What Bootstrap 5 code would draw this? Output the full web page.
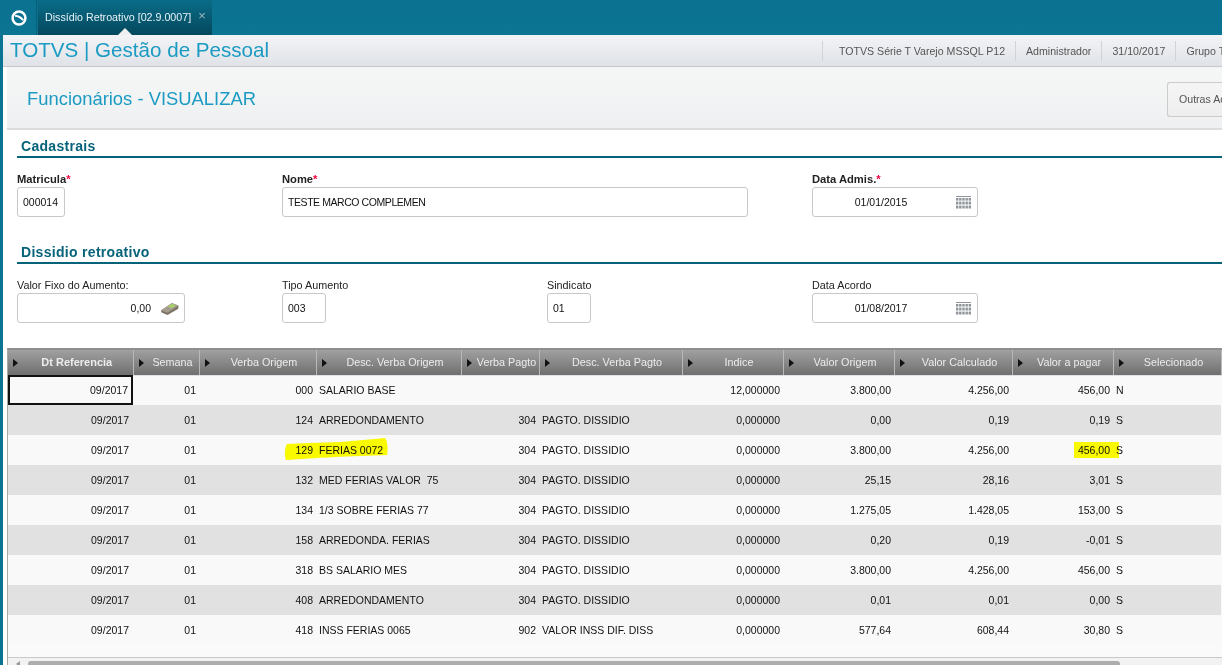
<!DOCTYPE html>
<html lang="pt-BR">
<head>
<meta charset="utf-8">
<title>Dissídio Retroativo</title>
<link href="https://cdn.jsdelivr.net/npm/bootstrap@5.3.0/dist/css/bootstrap.min.css" rel="stylesheet">
<style>
html,body{width:1222px;height:665px;overflow:hidden;margin:0}
body{background:#0a7492;font-family:"Liberation Sans",Arial,sans-serif;color:#111;font-size:10.5px;line-height:1.2}
.topbar{height:35px;background:linear-gradient(#0b7190,#0b7594)}
.logocell{width:37px;border-right:1px solid #0a5f78;padding-left:1px}
.tabitem{width:174px;margin-left:1px;background:linear-gradient(#0a6c88,#04485d);color:#e6f3f7;font-size:10.7px;padding:0 7px;height:35px;position:relative;white-space:nowrap}
.tabitem::after{content:"";position:absolute;left:80px;bottom:0;border:7px solid transparent;border-top:0;border-bottom-color:#eef0f2}
.tabclose{color:#9fb8c2;font-size:13px;margin-left:7px;line-height:1;margin-top:-4px}
.pagebody{margin-left:3px;height:630px;background:#fff;overflow:hidden}
.appbar{height:32px;background:linear-gradient(#f3f4f6,#dfe2e7);border-bottom:1px solid #c5c8cc;white-space:nowrap}
.apptitle{font-size:20.6px;color:#1b9bc3;margin-left:7px;line-height:1;width:812px;flex:none}
.appinfo{color:#555;font-size:10.6px;border-left:1px solid #d0d3d7;height:20px;line-height:20px;padding:0 10px;flex:none}
.appinfo.firstinfo{padding:0 10px 0 16px}
.barpad{padding-top:3px;background:linear-gradient(90deg,#fff 4px,#f4f5f5 4px)}
.pagebar{height:60px;margin-left:4px;background:linear-gradient(#f5f6f6,#eff0f1);border-bottom:2px solid #dcdcdc;white-space:nowrap;position:relative}
.pagetitle{font-size:18.4px;color:#1b9bc3;margin-left:20px;width:1140px;flex:none}
.otherbtn{height:35px;width:70px;flex:none;border:1px solid #ccc;border-radius:3px 0 0 3px;background:linear-gradient(#f5f5f5,#eee);color:#555;font-size:10.6px;padding:0 0 0 11px;text-align:left;border-right:0;margin-top:1px;white-space:nowrap;overflow:hidden;line-height:33px}
.sectbox{margin-left:14px}
.secthead{color:#07637a;font-size:14px;font-weight:700;letter-spacing:.3px;border-bottom:2px solid #07637a;padding-left:4px;line-height:16px;padding-top:8px;box-sizing:content-box;height:18px}
.fieldrow{padding-top:15px}
.fieldcell{width:265px;flex:none}
.fieldname{font-size:10.8px;height:14px;line-height:13px;color:#222;white-space:nowrap}
.fieldname.strong{font-weight:700;font-size:11.2px}
.reqmark{color:#f0003c}
.valuebox.form-control{height:30px;min-height:30px;border:1px solid #c8c8c8;border-radius:3px;padding:0 5px;font-size:10.5px;line-height:28px;color:#111;background:#fff;white-space:nowrap;overflow:hidden;display:flex;align-items:center}
.w48{width:48px}.w44{width:44px}.w466{width:466px}.w166{width:166px}.w168{width:168px}
.tightcaps{letter-spacing:-.43px}
.calicon{margin-right:1px;margin-left:16px;flex:none}
.cashicon{margin-right:-1px;margin-left:9px;flex:none}
.gapone{height:19px}
.gridwrap{margin:25px 0 0 4px;position:relative;border-left:1px solid #a9a9a9;border-top:2px solid #8f8f8f;height:317px;background:#fafafa}
.datagrid{table-layout:fixed;width:1213px;border-collapse:collapse;margin:0;font-size:10.5px;color:#111}
.datagrid th{height:25px;padding:0;background:linear-gradient(#a0a0a0,#6f6f6f);color:#ececec;font-weight:400;font-size:10.8px;border-right:1px solid #b9b9b9;white-space:nowrap;vertical-align:middle}
.datagrid th:first-child{font-weight:700;font-size:11px}
.hcaret{width:13px;flex:none;padding-left:5px;display:flex}
.hcaret::before{content:"";border-left:5px solid #111;border-top:4px solid transparent;border-bottom:4px solid transparent;margin-top:2px}
.datagrid td{height:30px;padding:0 3px;border:0;white-space:nowrap;overflow:hidden;background:#f9f9f9;box-shadow:none;vertical-align:middle}
.datagrid tr.shaderow td{background:#e1e1e1}
.datagrid td.num{text-align:right}
.datagrid td:first-child{padding-right:4px}
.datagrid td.cursorcell{outline:2px solid #111;outline-offset:-2px;padding-right:5px}
.markers{position:absolute;left:0;top:0;mix-blend-mode:multiply;pointer-events:none}
.scrollzone{position:absolute;left:0;right:0;bottom:0;height:8px;border-top:1px solid #c9c9c9;background:#f2f2f2}
.scrollthumb{position:absolute;left:20px;width:1092px;top:3px;height:6px;background:#adadad;border-radius:3px 3px 0 0}
.scrollarrow{position:absolute;left:8px;top:3px;border-right:4px solid #999;border-top:3px solid transparent;border-bottom:3px solid transparent}
</style>
</head>
<body>
<svg width="0" height="0" class="position-absolute">
  <symbol id="calgrid" viewBox="0 0 15 13">
    <rect x="0" y="0" width="15" height="1" fill="#8f959b"/>
    <g fill="#8f959b">
      <rect x="0" y="2" width="2.4" height="2.6"/><rect x="3.1" y="2" width="2.4" height="2.6"/><rect x="6.3" y="2" width="2.4" height="2.6"/><rect x="9.5" y="2" width="2.4" height="2.6"/><rect x="12.6" y="2" width="2.4" height="2.6"/>
      <rect x="0" y="5.6" width="2.4" height="2.9"/><rect x="3.1" y="5.6" width="2.4" height="2.9"/><rect x="6.3" y="5.6" width="2.4" height="2.9"/><rect x="9.5" y="5.6" width="2.4" height="2.9"/><rect x="12.6" y="5.6" width="2.4" height="2.9"/>
      <rect x="0" y="9.6" width="2.4" height="2.9"/><rect x="3.1" y="9.6" width="2.4" height="2.9"/><rect x="6.3" y="9.6" width="2.4" height="2.9"/><rect x="9.5" y="9.6" width="2.4" height="2.9"/><rect x="12.6" y="9.6" width="2.4" height="2.9"/>
    </g>
  </symbol>
</svg>

<div class="topbar d-flex">
  <div class="logocell d-flex align-items-center justify-content-center">
    <svg width="18" height="18" viewBox="0 0 18 18"><circle cx="9" cy="9" r="6.4" fill="none" stroke="#fff" stroke-width="2.5"/><path d="M5 6.8c3 .2 6 1.8 8.2 4.4" fill="none" stroke="#fff" stroke-width="2"/></svg>
  </div>
  <div class="tabitem d-flex align-items-center"><span>Dissídio Retroativo [02.9.0007]</span><span class="tabclose">×</span></div>
</div>

<div class="pagebody">
  <div class="appbar d-flex align-items-center">
    <div class="apptitle">TOTVS | Gestão de Pessoal</div>
    <div class="appinfo firstinfo">TOTVS Série T Varejo MSSQL P12</div>
    <div class="appinfo">Administrador</div>
    <div class="appinfo">31/10/2017</div>
    <div class="appinfo">Grupo TOTVS</div>
  </div>
  <div class="barpad">
    <div class="pagebar d-flex align-items-center">
      <div class="pagetitle">Funcionários - VISUALIZAR</div>
      <button type="button" class="otherbtn">Outras Ações</button>
    </div>
  </div>

  <div class="sectbox">
    <div class="secthead">Cadastrais</div>
    <div class="fieldrow d-flex">
      <div class="fieldcell"><div class="fieldname strong">Matricula<span class="reqmark">*</span></div><div class="valuebox form-control w48">000014</div></div>
      <div class="fieldcell"><div class="fieldname strong">Nome<span class="reqmark">*</span></div><div class="valuebox form-control w466"><span class="tightcaps">TESTE MARCO COMPLEMEN</span></div></div>
      <div class="fieldcell"></div>
      <div class="fieldcell"><div class="fieldname strong">Data Admis.<span class="reqmark">*</span></div><div class="valuebox form-control w166"><span class="flex-grow-1 text-center ps-1">01/01/2015</span><svg width="15" height="13" class="calicon"><use href="#calgrid"/></svg></div></div>
    </div>
    <div class="gapone"></div>
    <div class="secthead">Dissidio retroativo</div>
    <div class="fieldrow d-flex">
      <div class="fieldcell"><div class="fieldname">Valor Fixo do Aumento:</div><div class="valuebox form-control w168"><span class="flex-grow-1 text-end">0,00</span>
        <svg width="20" height="15" viewBox="0 0 20 15" class="cashicon"><path d="M1 9.5 12 2.2l6.5 2.6-.2 3L7.5 14 1.5 11.6z" fill="#7d7468"/><path d="M1 9.2 12 2l6.5 2.6L7.5 11.8z" fill="#a59c8e"/><path d="M7.8 5.6 12.2 2.8l3.8 1.5-4.4 2.9z" fill="#a8d06a"/></svg></div></div>
      <div class="fieldcell"><div class="fieldname">Tipo Aumento</div><div class="valuebox form-control w44">003</div></div>
      <div class="fieldcell"><div class="fieldname">Sindicato</div><div class="valuebox form-control w44">01</div></div>
      <div class="fieldcell"><div class="fieldname">Data Acordo</div><div class="valuebox form-control w166"><span class="flex-grow-1 text-center ps-1">01/08/2017</span><svg width="15" height="13" class="calicon"><use href="#calgrid"/></svg></div></div>
    </div>
  </div>

  <div class="gridwrap">
    <table class="table datagrid">
      <colgroup>
        <col style="width:125px"><col style="width:66px"><col style="width:117px"><col style="width:145px"><col style="width:78px"><col style="width:143px"><col style="width:101px"><col style="width:111px"><col style="width:118px"><col style="width:101px"><col style="width:108px">
      </colgroup>
      <thead>
        <tr>
          <th><div class="d-flex align-items-center"><span class="hcaret"></span><span class="flex-grow-1 text-center">Dt Referencia</span></div></th>
          <th><div class="d-flex align-items-center"><span class="hcaret"></span><span class="flex-grow-1 text-center">Semana</span></div></th>
          <th><div class="d-flex align-items-center"><span class="hcaret"></span><span class="flex-grow-1 text-center">Verba Origem</span></div></th>
          <th><div class="d-flex align-items-center"><span class="hcaret"></span><span class="flex-grow-1 text-center">Desc. Verba Origem</span></div></th>
          <th><div class="d-flex align-items-center"><span class="hcaret"></span><span class="flex-grow-1 text-center">Verba Pagto</span></div></th>
          <th><div class="d-flex align-items-center"><span class="hcaret"></span><span class="flex-grow-1 text-center">Desc. Verba Pagto</span></div></th>
          <th><div class="d-flex align-items-center"><span class="hcaret"></span><span class="flex-grow-1 text-center">Indice</span></div></th>
          <th><div class="d-flex align-items-center"><span class="hcaret"></span><span class="flex-grow-1 text-center">Valor Origem</span></div></th>
          <th><div class="d-flex align-items-center"><span class="hcaret"></span><span class="flex-grow-1 text-center">Valor Calculado</span></div></th>
          <th><div class="d-flex align-items-center"><span class="hcaret"></span><span class="flex-grow-1 text-center">Valor a pagar</span></div></th>
          <th><div class="d-flex align-items-center"><span class="hcaret"></span><span class="flex-grow-1 text-center">Selecionado</span></div></th>
        </tr>
      </thead>
      <tbody>
        <tr><td class="num cursorcell">09/2017</td><td class="num">01</td><td class="num">000</td><td>SALARIO BASE</td><td class="num"></td><td></td><td class="num">12,000000</td><td class="num">3.800,00</td><td class="num">4.256,00</td><td class="num">456,00</td><td>N</td></tr>
        <tr class="shaderow"><td class="num">09/2017</td><td class="num">01</td><td class="num">124</td><td>ARREDONDAMENTO</td><td class="num">304</td><td>PAGTO. DISSIDIO</td><td class="num">0,000000</td><td class="num">0,00</td><td class="num">0,19</td><td class="num">0,19</td><td>S</td></tr>
        <tr><td class="num">09/2017</td><td class="num">01</td><td class="num">129</td><td>FERIAS 0072</td><td class="num">304</td><td>PAGTO. DISSIDIO</td><td class="num">0,000000</td><td class="num">3.800,00</td><td class="num">4.256,00</td><td class="num">456,00</td><td>S</td></tr>
        <tr class="shaderow"><td class="num">09/2017</td><td class="num">01</td><td class="num">132</td><td>MED FERIAS VALOR&nbsp; 75</td><td class="num">304</td><td>PAGTO. DISSIDIO</td><td class="num">0,000000</td><td class="num">25,15</td><td class="num">28,16</td><td class="num">3,01</td><td>S</td></tr>
        <tr><td class="num">09/2017</td><td class="num">01</td><td class="num">134</td><td>1/3 SOBRE FERIAS 77</td><td class="num">304</td><td>PAGTO. DISSIDIO</td><td class="num">0,000000</td><td class="num">1.275,05</td><td class="num">1.428,05</td><td class="num">153,00</td><td>S</td></tr>
        <tr class="shaderow"><td class="num">09/2017</td><td class="num">01</td><td class="num">158</td><td>ARREDONDA. FERIAS</td><td class="num">304</td><td>PAGTO. DISSIDIO</td><td class="num">0,000000</td><td class="num">0,20</td><td class="num">0,19</td><td class="num">-0,01</td><td>S</td></tr>
        <tr><td class="num">09/2017</td><td class="num">01</td><td class="num">318</td><td>BS SALARIO MES</td><td class="num">304</td><td>PAGTO. DISSIDIO</td><td class="num">0,000000</td><td class="num">3.800,00</td><td class="num">4.256,00</td><td class="num">456,00</td><td>S</td></tr>
        <tr class="shaderow"><td class="num">09/2017</td><td class="num">01</td><td class="num">408</td><td>ARREDONDAMENTO</td><td class="num">304</td><td>PAGTO. DISSIDIO</td><td class="num">0,000000</td><td class="num">0,01</td><td class="num">0,01</td><td class="num">0,00</td><td>S</td></tr>
        <tr><td class="num">09/2017</td><td class="num">01</td><td class="num">418</td><td>INSS FERIAS 0065</td><td class="num">902</td><td>VALOR INSS DIF. DISS</td><td class="num">0,000000</td><td class="num">577,64</td><td class="num">608,44</td><td class="num">30,80</td><td>S</td></tr>
      </tbody>
    </table>
    <svg class="markers" width="1213" height="130" viewBox="8 350 1213 130">
      <path d="M287 444C300 443 320 443 340 442C355 441 372 439 385 438C388 441 388 452 387 455C370 456 350 456 335 457C315 458 300 459 286 460C284 455 285 447 287 444Z" fill="#ffff00"/>
      <rect x="1074" y="442" width="45" height="16" fill="#ffff00"/>
    </svg>
    <div class="scrollzone"><span class="scrollarrow"></span><span class="scrollthumb"></span></div>
  </div>
</div>
<script src="https://cdn.jsdelivr.net/npm/bootstrap@5.3.0/dist/js/bootstrap.bundle.min.js"></script>
</body>
</html>
